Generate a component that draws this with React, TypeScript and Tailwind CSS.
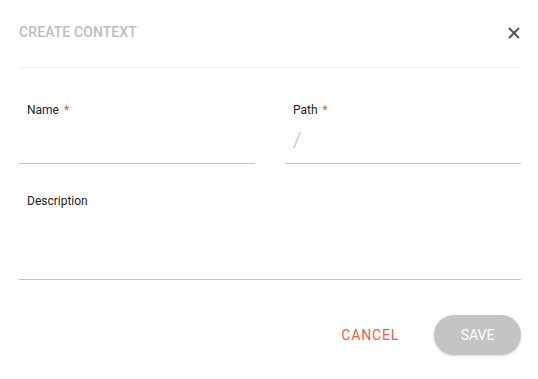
export default function App() {
  return (
    <div
      className="w-[538px] h-[379px] bg-white pl-[19px] pr-[17px]"
      style={{ fontFamily: 'Roboto, "Liberation Sans", sans-serif' }}
    >
      {/* Header */}
      <div className="flex items-start justify-between h-[68px] pt-[24px] border-b border-[#f2f2f2]">
        <h2 className="text-[14px] leading-[17px] font-medium text-[#bdbdbd] tracking-[0.1px]">
          CREATE CONTEXT
        </h2>
        <button className="mt-[3px] mr-[1px] text-[#555]">
          <svg width="12" height="12" viewBox="0 0 12 12">
            <path d="M1 1 L11 11 M11 1 L1 11" stroke="currentColor" strokeWidth="2" />
          </svg>
        </button>
      </div>

      {/* Name / Path */}
      <div className="grid grid-cols-2 gap-[30px] pt-[35px]">
        <div>
          <label className="block pl-[8px] text-[12px] leading-[14px] text-[#222]">
            Name <span className="text-[#f4511e] ml-[2px]">*</span>
          </label>
          <div className="h-[47px] border-b border-[#c4c4c4]" />
        </div>
        <div>
          <label className="block pl-[8px] text-[12px] leading-[14px] text-[#222]">
            Path <span className="text-[#f4511e] ml-[2px]">*</span>
          </label>
          <div className="h-[47px] border-b border-[#c4c4c4] pl-[8px] pt-[11px] text-[21px] leading-[25px] text-[#bdbdbd] font-light">
            /
          </div>
        </div>
      </div>

      {/* Description */}
      <div className="pt-[30px]">
        <label className="block pl-[8px] text-[12px] leading-[14px] text-[#222]">
          Description
        </label>
        <div className="h-[72px] border-b border-[#c4c4c4]" />
      </div>

      {/* Actions */}
      <div className="flex items-center justify-end gap-[35px] pt-[35px]">
        <button className="text-[14px] leading-[16px] text-[#f5594a] tracking-[0.8px]">
          CANCEL
        </button>
        <button className="w-[87px] h-[40px] rounded-full bg-[#c4c4c4] text-white text-[14px] shadow-[0_1px_3px_rgba(0,0,0,0.15)]">
          SAVE
        </button>
      </div>
    </div>
  );
}
